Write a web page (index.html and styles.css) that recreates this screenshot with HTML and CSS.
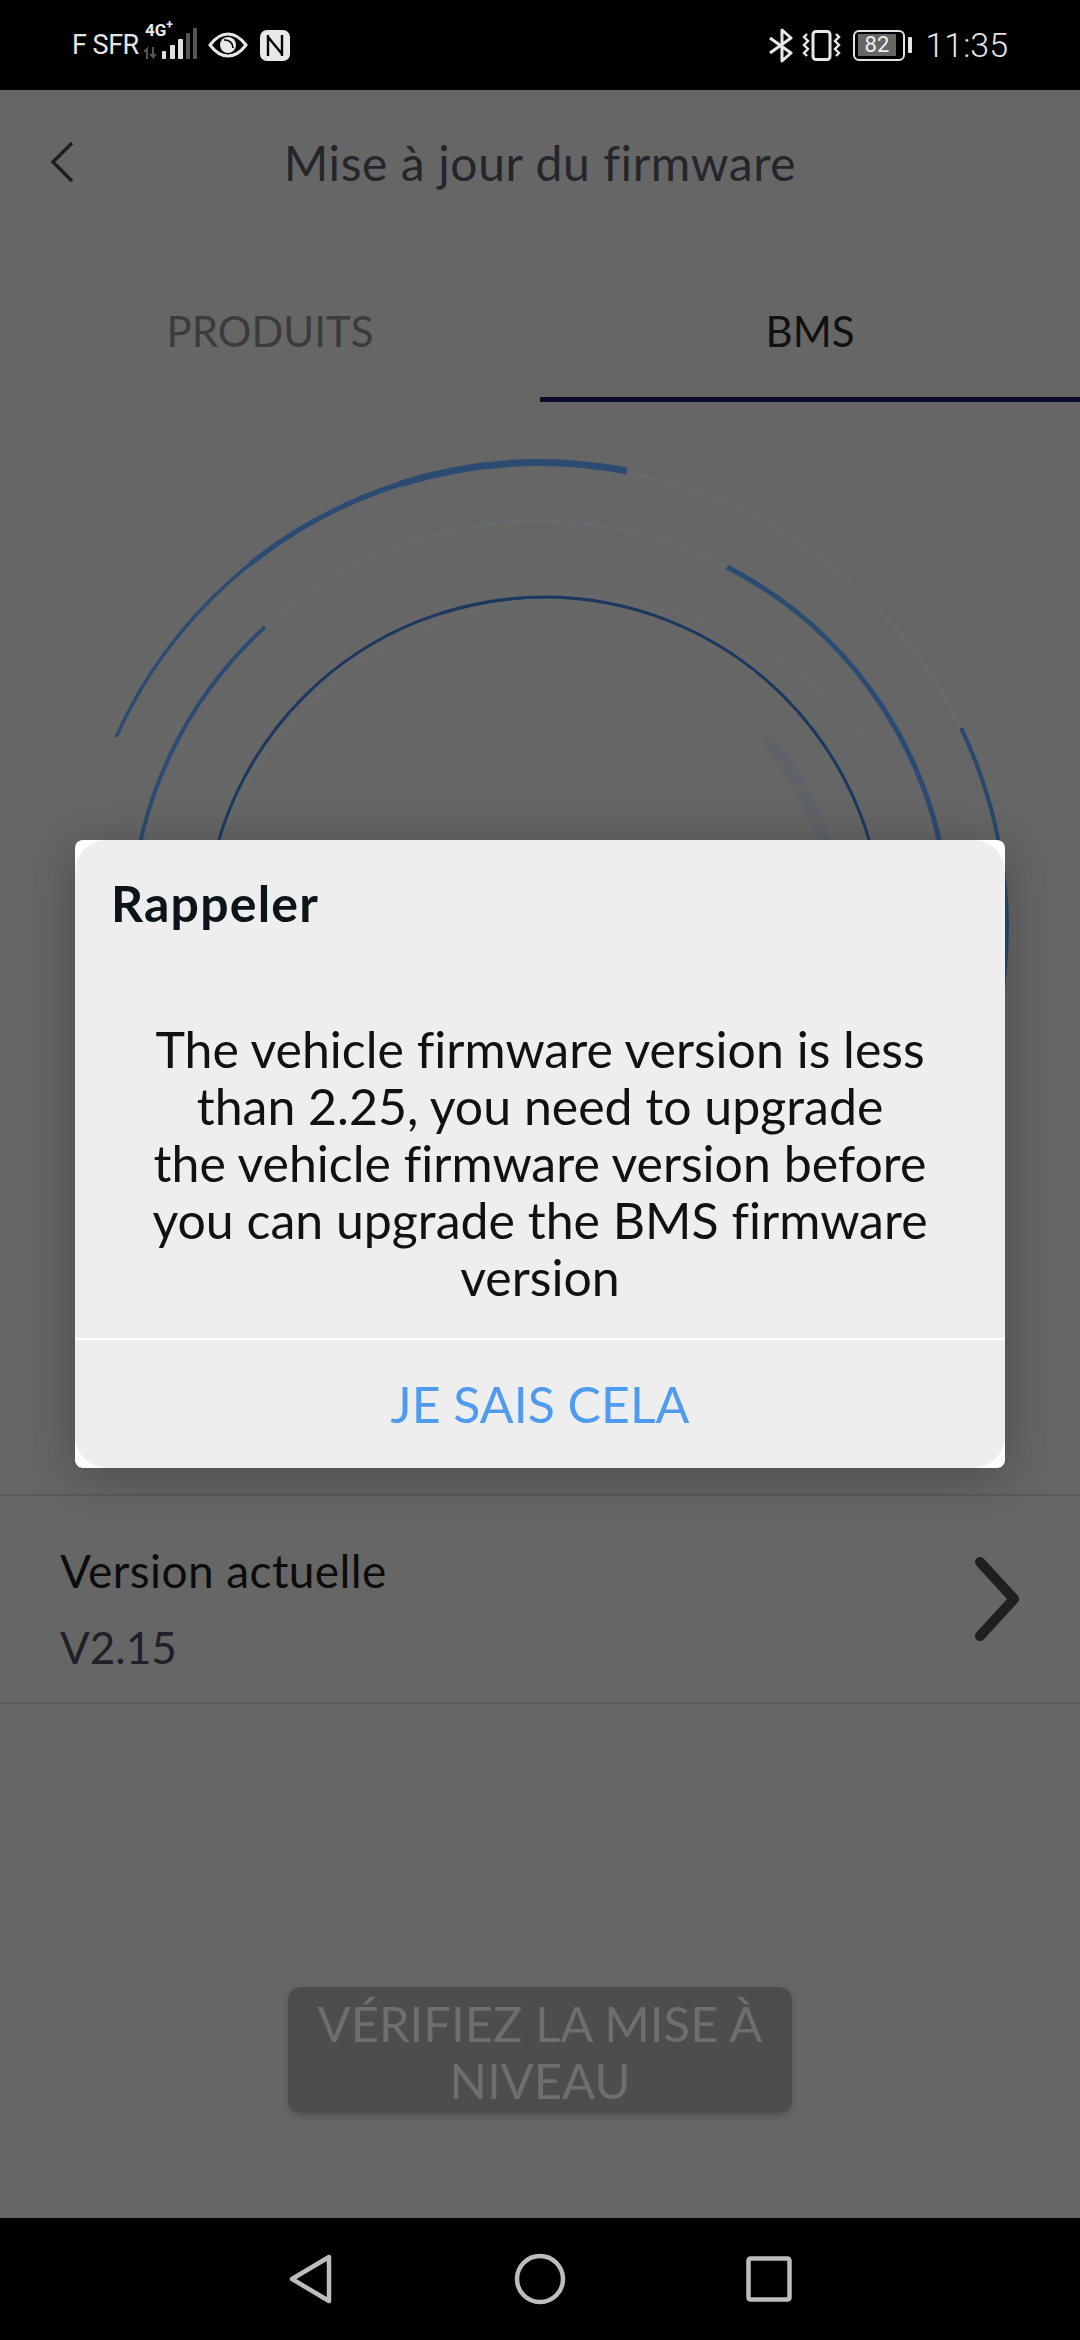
FILE: index.html
```html
<!DOCTYPE html>
<html lang="fr">
<head>
  <meta charset="UTF-8" />
  <meta name="viewport" content="width=device-width, initial-scale=1.0"/>
  <title>Mise à jour du firmware</title>
  <link rel="stylesheet" href="styles.css">
</head>
<body>
  <div class="phone">

    <!-- Status bar -->
    <div class="status-bar">
      <div class="status-left">
        <span class="carrier">F SFR</span>
        <div class="signal">
          <span class="net">4G<sup>+</sup></span>
          <svg class="bars" width="58" height="34" viewBox="0 0 58 34">
            <path class="dim" d="M3 32V22l-3 3M9 20v10l-3-3M9 30l3-3" />
            <rect x="18" y="24" width="4" height="8" rx="1" fill="#e0e0e0"/>
            <rect x="26" y="18" width="5" height="14" rx="1" fill="#e0e0e0"/>
            <rect x="34" y="12" width="5" height="20" rx="1" fill="#e0e0e0"/>
            <rect x="42" y="6" width="4" height="26" rx="1" fill="#555"/>
            <rect x="49" y="1" width="4" height="31" rx="1" fill="#555"/>
          </svg>
        </div>
        <svg class="eye" width="40" height="26" viewBox="0 0 40 26">
          <path d="M2 13C8 5 14 2 20 2s12 3 18 11c-6 8-12 11-18 11S8 21 2 13z" fill="none" stroke="#e8e8e8" stroke-width="3"/>
          <circle cx="20" cy="13" r="8" fill="#e8e8e8"/>
          <path d="M16 8a8 8 0 0 1 9 8" fill="none" stroke="#000" stroke-width="1.6"/>
        </svg>
        <svg class="nfc" width="30" height="31" viewBox="0 0 30 31">
          <rect x="0" y="0" width="30" height="31" rx="7" fill="#e8e8e8"/>
          <path d="M8 5v21M22 5v21M8 7l14 17" fill="none" stroke="#000" stroke-width="2.4"/>
        </svg>
      </div>
      <div class="status-right">
        <svg width="24" height="35" viewBox="0 0 24 35">
          <path d="M1 10l21 15-9 8V2l9 8L1 25" fill="none" stroke="#e8e8e8" stroke-width="3" stroke-linejoin="round"/>
        </svg>
        <svg class="vibrate" width="39" height="31" viewBox="0 0 39 31">
          <rect x="11" y="1.5" width="17" height="28" rx="3" fill="none" stroke="#e8e8e8" stroke-width="3"/>
          <path d="M5 4l-3 3 4 4-4 4 4 4-4 4 3 3M34 4l3 3-4 4 4 4-4 4 4 4-3 3" fill="none" stroke="#e8e8e8" stroke-width="2.4"/>
        </svg>
        <div class="battery">
          <div class="battery-body"><span class="battery-level">82</span></div>
          <div class="battery-nub"></div>
        </div>
        <span class="clock">11:35</span>
      </div>
    </div>

    <!-- Page -->
    <div class="page">
      <header class="title-bar">
        <svg class="back" width="30" height="44" viewBox="0 0 30 44">
          <path d="M25 3L6 22l19 19" fill="none" stroke="#1e1e24" stroke-width="3.5"/>
        </svg>
        <h1>Mise à jour du firmware</h1>
      </header>

      <nav class="tabs">
        <div class="tab">PRODUITS</div>
        <div class="tab active">BMS</div>
      </nav>

      <div class="gauge">
        <svg width="1080" height="1092" viewBox="0 0 1080 1092">
          <g fill="none">
            <!-- faint rings -->
            <path stroke="#686a6c" stroke-width="3" d="M627 71A467 467 0 0 1 961 326"/>
            <path stroke="#676a6c" stroke-width="4" d="M265 225A409 409 0 0 1 727 165"/>
            <path stroke="#67686a" stroke-width="6" d="M205 480A380 380 0 0 1 870 340"/>
            <!-- grey progress -->
            <path stroke="#5f6368" stroke-width="13" d="M764 335A295 295 0 0 1 838 520"/>
            <!-- outer ring -->
            <path stroke="#2c4b72" stroke-width="3.5" d="M116 335A467 467 0 0 1 400 82"/>
            <path stroke="#2c4b72" stroke-width="5" d="M250 162A467 467 0 0 1 400 82"/>
            <path stroke="#2c4b72" stroke-width="7" d="M400 82A467 467 0 0 1 627 69"/>
            <path stroke="#28486f" stroke-width="4" d="M961 326A467 467 0 0 1 1007 528"/>
            <path stroke="#28486f" stroke-width="3.5" d="M1007 528A467 467 0 0 1 1000 608"/>
            <!-- middle ring -->
            <path stroke="#2c4b72" stroke-width="4" d="M265 225A409 409 0 0 0 132 498"/>
            <path stroke="#2c4b72" stroke-width="5" d="M727 165A409 409 0 0 1 948 498"/>
            <!-- inner ring -->
            <path stroke="#1d3860" stroke-width="3" d="M205 534A339 339 0 0 1 883 534"/>
            <path stroke="#1d3860" stroke-width="2.5" d="M440 212A339 339 0 0 1 650 212"/>
          </g>
        </svg>
      </div>

      <div class="version-row">
        <div>
          <div class="version-label">Version actuelle</div>
          <div class="version-value">V2.15</div>
        </div>
        <svg class="row-arrow" width="52" height="84" viewBox="0 0 52 84">
          <path d="M8 5l34 37L8 79" fill="none" stroke="#1f1f1f" stroke-width="10" stroke-linecap="round" stroke-linejoin="round"/>
        </svg>
      </div>

      <div class="check-wrap">
        <button class="check-btn">VÉRIFIEZ LA MISE À NIVEAU</button>
      </div>
    </div>

    <!-- Nav bar -->
    <div class="nav-bar">
      <svg width="46" height="52" viewBox="0 0 46 52">
        <path d="M41 4L4 26l37 22z" fill="none" stroke="#bdbdbd" stroke-width="4.5" stroke-linejoin="round"/>
      </svg>
      <svg width="52" height="52" viewBox="0 0 52 52">
        <circle cx="26" cy="26" r="23" fill="none" stroke="#bdbdbd" stroke-width="4.5"/>
      </svg>
      <svg width="46" height="46" viewBox="0 0 46 46">
        <rect x="2.5" y="2.5" width="41" height="41" rx="2" fill="none" stroke="#bdbdbd" stroke-width="4.5"/>
      </svg>
    </div>

    <!-- Dialog -->
    <div class="dialog">
      <div class="dialog-inner">
        <h2>Rappeler</h2>
        <p>The vehicle firmware version is less<br>than 2.25, you need to upgrade<br>the vehicle firmware version before<br>you can upgrade the BMS firmware<br>version</p>
        <div class="dialog-action">JE SAIS CELA</div>
      </div>
    </div>

  </div>
</body>
</html>
```

FILE: styles.css
```css
* {
  box-sizing: border-box;
}

body {
  margin: 0;
  background: #000;
  font-family: 'Lato', 'Noto Sans', sans-serif;
  font-variant-ligatures: none;
}

.phone {
  position: relative;
  width: 1080px;
  height: 2340px;
  display: flex;
  flex-direction: column;
  overflow: hidden;
}

/* status bar */
.status-bar {
  height: 90px;
  background: #000;
  color: #e4e4e4;
  display: flex;
  justify-content: space-between;
  align-items: center;
  padding: 0 72px 0 72px;
  font-family: 'Roboto', sans-serif;
}

.status-left,
.status-right {
  display: flex;
  align-items: center;
}

.carrier {
  font-size: 27px;
  letter-spacing: -0.5px;
  width: 72px;
}

.signal {
  position: relative;
  width: 58px;
  height: 34px;
  margin-top: -2px;
}

.net {
  position: absolute;
  left: 1px;
  top: -6px;
  font-size: 17px;
  line-height: 18px;
  font-weight: 700;
  color: #e8e8e8;
}

.net sup {
  font-size: 12px;
  line-height: 0;
}

.bars {
  position: absolute;
  left: 0;
  top: 0;
}

.bars .dim {
  fill: none;
  stroke: #555;
  stroke-width: 2;
}

.eye {
  margin-left: 6px;
}

.nfc {
  margin-left: 12px;
}

.vibrate {
  margin-left: 9px;
}

.battery {
  display: flex;
  align-items: center;
  margin-left: 12px;
}

.battery-body {
  width: 52px;
  height: 31px;
  border: 2.5px solid #e4e4e4;
  border-radius: 6px;
  padding: 2.5px;
  display: flex;
}

.battery-level {
  width: 38px;
  background: #666;
  color: #f0f0f0;
  font-size: 22px;
  line-height: 21px;
  text-align: center;
}

.battery-nub {
  width: 4px;
  height: 16px;
  margin-left: 3px;
  background: #e4e4e4;
  border-radius: 1px;
}

.clock {
  margin-left: 13px;
  font-size: 34px;
  font-weight: 300;
}

/* page behind the dialog */
.page {
  flex: 1;
  background: #666;
  display: flex;
  flex-direction: column;
}

.title-bar {
  position: relative;
  height: 150px;
  display: flex;
  align-items: center;
  justify-content: center;
}

.title-bar h1 {
  margin: 0 0 6px 0;
  font-size: 48px;
  letter-spacing: 0.6px;
  font-weight: 400;
  color: #25252c;
}

.back {
  position: absolute;
  left: 47px;
  top: 50px;
}

.tabs {
  height: 162px;
  display: flex;
}

.tab {
  flex: 1;
  text-align: center;
  padding-top: 66px;
  font-size: 42px;
  color: #3b3b3b;
}

.tab.active {
  color: #111;
  border-bottom: 5px solid #0b0b2c;
}

.gauge {
  height: 1092px;
  overflow: hidden;
}

.gauge svg {
  display: block;
}

.version-row {
  height: 210px;
  border-top: 2px solid #5a5a5a;
  border-bottom: 2px solid #5a5a5a;
  padding: 20px 56px 0 60px;
  display: flex;
  justify-content: space-between;
  align-items: center;
}

.version-label {
  font-size: 46px;
  letter-spacing: 0.4px;
  line-height: 56px;
  color: #0c0c0c;
  margin-bottom: 20px;
}

.version-value {
  font-size: 44px;
  line-height: 56px;
  color: #1f2029;
}

.row-arrow {
  margin-top: -20px;
}

.check-wrap {
  flex: 1;
  display: flex;
  justify-content: center;
  padding-top: 283px;
}

.check-btn {
  width: 504px;
  height: 126px;
  padding: 3px 10px 0;
  border: none;
  border-radius: 13px;
  background: #4d4d4d;
  color: #6e6e6e;
  font-family: inherit;
  font-size: 49px;
  line-height: 57px;
  box-shadow: 0 3px 6px rgba(0,0,0,0.2);
}

/* system nav */
.nav-bar {
  height: 122px;
  background: #000;
  display: flex;
  align-items: center;
  justify-content: space-between;
  padding: 0 288px;
}

/* dialog */
.dialog {
  position: absolute;
  left: 75px;
  top: 840px;
  width: 930px;
  height: 628px;
  background: #fff;
  border-radius: 8px;
  box-shadow: 0 8px 50px rgba(0,0,0,0.28);
}

.dialog-inner {
  height: 100%;
  background: #eee;
  border-radius: 32px;
  display: flex;
  flex-direction: column;
}

.dialog-inner h2 {
  margin: 0;
  padding: 32px 36px 0;
  font-size: 50px;
  letter-spacing: 1.2px;
  line-height: 62px;
  font-weight: 700;
  color: #0b1419;
}

.dialog-inner p {
  margin: 0;
  padding: 87px 40px 32px;
  font-size: 50px;
  line-height: 57px;
  text-align: center;
  color: #111;
}

.dialog-action {
  flex: 1;
  border-top: 2px solid #fff;
  display: flex;
  align-items: center;
  justify-content: center;
  font-size: 50px;
  color: #4f9bf0;
}
```
